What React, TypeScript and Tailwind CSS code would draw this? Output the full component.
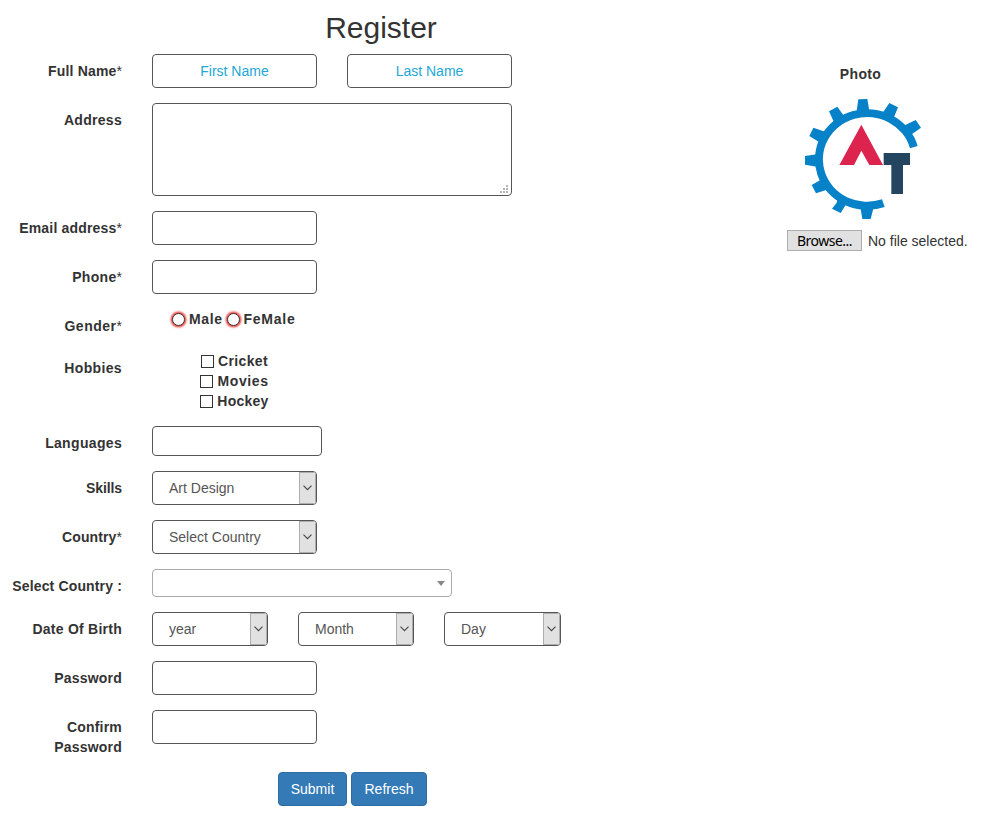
import type { ReactNode } from "react";

const field = "block rounded-[4px] border border-[#555] bg-white outline-none";

function Row({
  label,
  tracking,
  height,
  required = false,
  children,
}: {
  label: ReactNode;
  tracking: string;
  height: string;
  required?: boolean;
  children: ReactNode;
}) {
  return (
    <div className={`flex ${height}`}>
      <div className="flex w-[122px] shrink-0 justify-end pt-[7px] text-right font-bold whitespace-nowrap">
        <span className={tracking}>{label}</span>
        {required && <span className="w-[5.5px] font-normal">*</span>}
      </div>
      <div className="flex items-start pl-[30px]">{children}</div>
    </div>
  );
}

function Dropdown({ value, width }: { value: string; width: string }) {
  return (
    <div
      className={`flex h-[34px] justify-between overflow-hidden rounded-[4px] border border-[#555] bg-white text-[#555] ${width}`}
    >
      <span className="pl-4 leading-8">{value}</span>
      <span className="flex w-[17px] items-center justify-center border border-[#adadad] bg-[#e1e1e1] pr-px">
        <svg width="9" height="6" viewBox="0 0 9 6" fill="none" stroke="#444" strokeWidth="1.1">
          <path d="M0.5 0.7 4.5 4.7 8.5 0.7" />
        </svg>
      </span>
    </div>
  );
}

function Radio({ label, tracking }: { label: string; tracking: string }) {
  return (
    <label className="flex items-center gap-1 font-bold">
      <span className="size-[13px] rounded-full border-[1.5px] border-[#333] bg-white shadow-[0_0_2px_1.5px_#f0504f]" />
      <span className={tracking}>{label}</span>
    </label>
  );
}

function Check({ label, tracking }: { label: string; tracking: string }) {
  return (
    <label className="flex h-5 items-center gap-1 font-bold">
      <span className="size-[13px] border border-[#333] bg-white" />
      <span className={tracking}>{label}</span>
    </label>
  );
}

function Logo() {
  return (
    <svg width="118" height="122" viewBox="72 114 354 366">
      <g fill="#0782c9">
        <path d="M413 258A157 151 0 1 0 314 441L306 418A133 127 0 1 1 390 265Z" />
        <path d="M235 118 262 117 268 153 230 153Z" />
        <path d="M328 129 354 142 340 176 307 160Z" />
        <path d="M407 180 423 203 392 225 371 197Z" />
        <path d="M147 154 172 140 192 168 162 187Z" />
        <path d="M100 203 135 215 118 247 88 228Z" />
        <path d="M75 288 110 283 111 320 75 314Z" />
        <path d="M95 375 128 356 146 388 108 400Z" />
        <path d="M170 428 176 400 206 421 182 459 156 446Z" />
        <path d="M241 441 281 441 272 477 247 477Z" />
      </g>
      <path d="M244 194 309 315H268L244 272 222 315H178Z" fill="#dc244f" />
      <path d="M311 279H390V315H369V402H334V315H311Z" fill="#234560" />
    </svg>
  );
}

export default function App() {
  return (
    <main className="flex h-[816px] w-[986px] overflow-hidden bg-white font-['Liberation_Sans',Arial,sans-serif] text-[14px] leading-5 text-[#333]">
      <form className="w-[762px] shrink-0" onSubmit={(e) => e.preventDefault()}>
        <h2 className="h-[54px] pt-[11px] text-center text-[30px] leading-[33px] font-normal">Register</h2>
        <Row label="Full Name" required tracking="tracking-[0.17px]" height="h-[49px]">
          <div className="flex gap-[30px]">
            <input aria-label="First Name" placeholder="First Name" className={`${field} h-[34px] w-[165px] text-center placeholder:text-[#22a7d5]`} />
            <input aria-label="Last Name" placeholder="Last Name" className={`${field} h-[34px] w-[165px] text-center placeholder:text-[#22a7d5]`} />
          </div>
        </Row>
        <Row label="Address" tracking="tracking-[0.3px]" height="h-[108px]">
          <div className="relative">
            <textarea aria-label="Address" className={`${field} h-[93px] w-[360px] resize-none`} />
            <svg className="absolute right-[3px] bottom-[3px]" width="9" height="8" viewBox="0 0 9 8" fill="#b5b5b5">
              <path d="M6 0h2v2H6zM3 3h2v2H3zM6 3h2v2H6zM0 6h2v2H0zM3 6h2v2H3zM6 6h2v2H6z" />
            </svg>
          </div>
        </Row>
        <Row label="Email address" required tracking="tracking-[0.18px]" height="h-[49px]">
          <input aria-label="Email address" className={`${field} h-[34px] w-[165px]`} />
        </Row>
        <Row label="Phone" required tracking="tracking-[0.3px]" height="h-[49px]">
          <input aria-label="Phone" className={`${field} h-[34px] w-[165px]`} />
        </Row>
        <Row label="Gender" required tracking="tracking-[0.5px]" height="h-[42px]">
          <div className="flex gap-[4px] pl-5">
            <Radio label="Male" tracking="tracking-[0.6px]" />
            <Radio label="FeMale" tracking="tracking-[0.75px]" />
          </div>
        </Row>
        <Row label="Hobbies" tracking="tracking-[0.35px]" height="h-[75px]">
          <div className="flex w-[165px] flex-col items-center">
            <Check label="Cricket" tracking="tracking-[0.35px]" />
            <Check label="Movies" tracking="tracking-[0.6px]" />
            <Check label="Hockey" tracking="tracking-[0.25px]" />
          </div>
        </Row>
        <Row label="Languages" tracking="tracking-[0.33px]" height="h-[45px]">
          <div className={`${field} h-[30px] w-[170px]`} />
        </Row>
        <Row label="Skills" tracking="tracking-[-0.1px]" height="h-[49px]">
          <Dropdown value="Art Design" width="w-[165px]" />
        </Row>
        <Row label="Country" required tracking="tracking-[0.12px]" height="h-[49px]">
          <Dropdown value="Select Country" width="w-[165px]" />
        </Row>
        <Row label="Select Country :" tracking="tracking-[0.15px]" height="h-[43px]">
          <div className="flex h-7 w-[300px] items-center justify-end rounded-[4px] border border-[#aaa] bg-white pr-1.5">
            <span className="border-x-4 border-t-5 border-x-transparent border-t-[#888]" />
          </div>
        </Row>
        <Row label="Date Of Birth" tracking="tracking-[0.25px]" height="h-[49px]">
          <div className="flex gap-[30px]">
            <Dropdown value="year" width="w-[116px]" />
            <Dropdown value="Month" width="w-[116px]" />
            <Dropdown value="Day" width="w-[117px]" />
          </div>
        </Row>
        <Row label="Password" tracking="tracking-[0.2px]" height="h-[49px]">
          <input aria-label="Password" type="password" className={`${field} h-[34px] w-[165px]`} />
        </Row>
        <Row label={<>Confirm<br />Password</>} tracking="tracking-[0.2px]" height="h-[62px]">
          <input aria-label="Confirm Password" type="password" className={`${field} h-[34px] w-[165px]`} />
        </Row>
        <div className="flex gap-1 pl-[278px]">
          <button className="h-[34px] w-[69px] rounded-[4px] border border-[#2e6da4] bg-[#337ab7] text-white">Submit</button>
          <button className="h-[34px] w-[76px] rounded-[4px] border border-[#2e6da4] bg-[#337ab7] text-white">Refresh</button>
        </div>
      </form>
      <aside className="pt-16 pl-[25px]">
        <div className="w-[147px] text-center font-bold tracking-[0.35px]">Photo</div>
        <div className="mt-3.5 pl-[17px] [&>svg]:block">
          <Logo />
        </div>
        <div className="mt-[10px] flex items-center gap-1.5">
          <button className="h-[21px] w-[75px] border border-[#adadad] bg-[#e1e1e1] font-['Noto_Sans','Open_Sans',sans-serif] text-[14px] leading-[18px] tracking-[-0.5px] text-black">
            Browse...
          </button>
          <span className="whitespace-nowrap">No file selected.</span>
        </div>
      </aside>
    </main>
  );
}
